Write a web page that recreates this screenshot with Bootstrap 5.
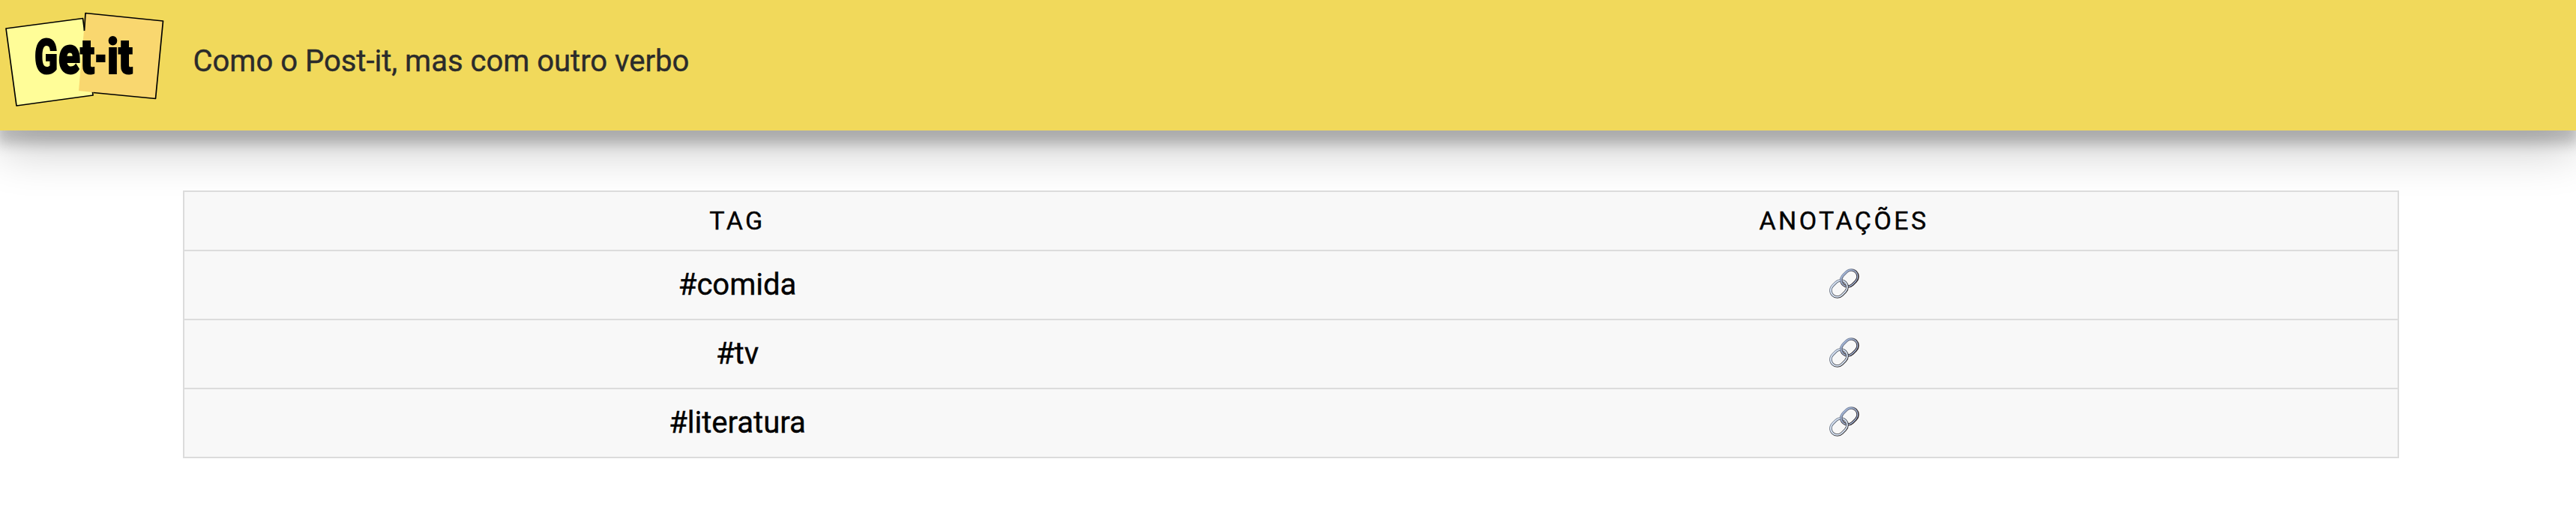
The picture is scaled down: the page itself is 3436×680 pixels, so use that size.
<!DOCTYPE html>
<html lang="pt-br">
<head>
<meta charset="utf-8">
<title>Get-it</title>
<link href="https://cdn.jsdelivr.net/npm/bootstrap@5.3.0/dist/css/bootstrap.min.css" rel="stylesheet">
<style>
body { font-family: Roboto, sans-serif; font-size: 40px; color: #000; background: #fff; }
.appbar { height: 174px; background: #f1d95b; box-shadow: 0 28px 62px rgba(0,0,0,.2), 0 14px 16px 4px rgba(0,0,0,.2); }
.logo { width: 240px; height: 160px; }
.logo text { font-family: Impact, Roboto, sans-serif; font-weight: 900; font-size: 64px; stroke: #000; stroke-width: 2px; }
.logo .tall { font-size: 70px; }
.subtitle { color: #2b2b2b; line-height: 60px; margin: 52px 0 0 17.500px; -webkit-text-stroke: .4px; }
.tags { width: 2956px; margin: 80px 0 0 244px; border-collapse: collapse; table-layout: fixed; background: #f8f8f8; -webkit-text-stroke: .4px; }
.tags, .tags tr { border: 2px solid #dcdcdc; }
.tags th { height: 79px; padding: 0 1px 2px 0; font-size: 34px; font-weight: 400; letter-spacing: 3.4px; text-transform: uppercase; line-height: 40px; }
.tags td { height: 92px; padding: 0; line-height: 48px; }
.tags td:first-child { padding-right: 1px; }
.tags td:last-child { padding-bottom: 4px; }
.chain { width: 40px; height: 40px; display: block; margin: 0 auto; }
</style>
</head>
<body>
<header class="appbar d-flex align-items-start">
  <svg class="logo flex-shrink-0" viewBox="0 0 240 160" role="img" aria-label="Get-it">
    <path d="M8 38L110.500 24.500L124 127L22 141Z" fill="#fffd98" stroke="#000" stroke-width="1.700" stroke-linejoin="round"/>
    <path d="M114 17.500L217.500 28L207.500 131.500L105 121Z" fill="#f9d76f"/>
    <path d="M112.500 41L114 17.500L217.500 28L207.500 131.500L124.500 123.500" fill="none" stroke="#000" stroke-width="1.700" stroke-linejoin="round"/>
    <text y="98"><tspan x="46" textLength="31" lengthAdjust="spacingAndGlyphs">G</tspan><tspan class="tall" x="78" textLength="29" lengthAdjust="spacingAndGlyphs">e</tspan><tspan x="107" textLength="19" lengthAdjust="spacingAndGlyphs">t</tspan><tspan x="126" textLength="17" lengthAdjust="spacingAndGlyphs">-</tspan><tspan x="143" textLength="15" lengthAdjust="spacingAndGlyphs">i</tspan><tspan x="158" textLength="19" lengthAdjust="spacingAndGlyphs">t</tspan></text>
  </svg>
  <p class="subtitle mb-0">Como o Post-it, mas com outro verbo</p>
</header>
<main>
  <table class="tags text-center align-middle">
    <thead><tr><th>Tag</th><th>Anotações</th></tr></thead>
    <tbody>
      <tr><td>#comida</td><td><svg class="chain"><use href="#link"/></svg></td></tr>
      <tr><td>#tv</td><td><svg class="chain"><use href="#link"/></svg></td></tr>
      <tr><td>#literatura</td><td><svg class="chain"><use href="#link"/></svg></td></tr>
    </tbody>
  </table>
</main>
<svg width="0" height="0" class="position-absolute" aria-hidden="true">
  <defs>
    <linearGradient id="steel" x1="0" y1="0" x2="0" y2="1"><stop offset="0" stop-color="#7f8ba3"/><stop offset=".5" stop-color="#4b4448"/><stop offset="1" stop-color="#2f2729"/></linearGradient>
    <linearGradient id="rim" x1="0" y1="0" x2="0" y2="1"><stop offset="0" stop-color="#6b7788"/><stop offset="1" stop-color="#3a3738"/></linearGradient>
    <clipPath id="hook"><rect x="12" y="12" width="7" height="10"/></clipPath>
    <g id="upper" transform="rotate(-45 27 13)">
      <rect x="15" y="4.200" width="24" height="17.600" rx="8.800" stroke="url(#steel)" stroke-width="3.600"/>
      <rect x="14.800" y="4" width="24" height="17.600" rx="8.800" stroke="#a9bee2" stroke-width="1.200"/>
    </g>
    <symbol id="link" viewBox="0 0 40 40">
      <g fill="none">
        <use href="#upper"/>
        <g transform="rotate(-45 13 27)">
          <rect x="1" y="18.200" width="24" height="17.600" rx="8.800" stroke="url(#rim)" stroke-width="3.600"/>
          <rect x="1" y="18" width="24" height="17.600" rx="8.800" stroke="#dbe7f8" stroke-width="1.800"/>
        </g>
        <use href="#upper" clip-path="url(#hook)"/>
      </g>
    </symbol>
  </defs>
</svg>
<script src="https://cdn.jsdelivr.net/npm/bootstrap@5.3.0/dist/js/bootstrap.bundle.min.js"></script>
</body>
</html>
